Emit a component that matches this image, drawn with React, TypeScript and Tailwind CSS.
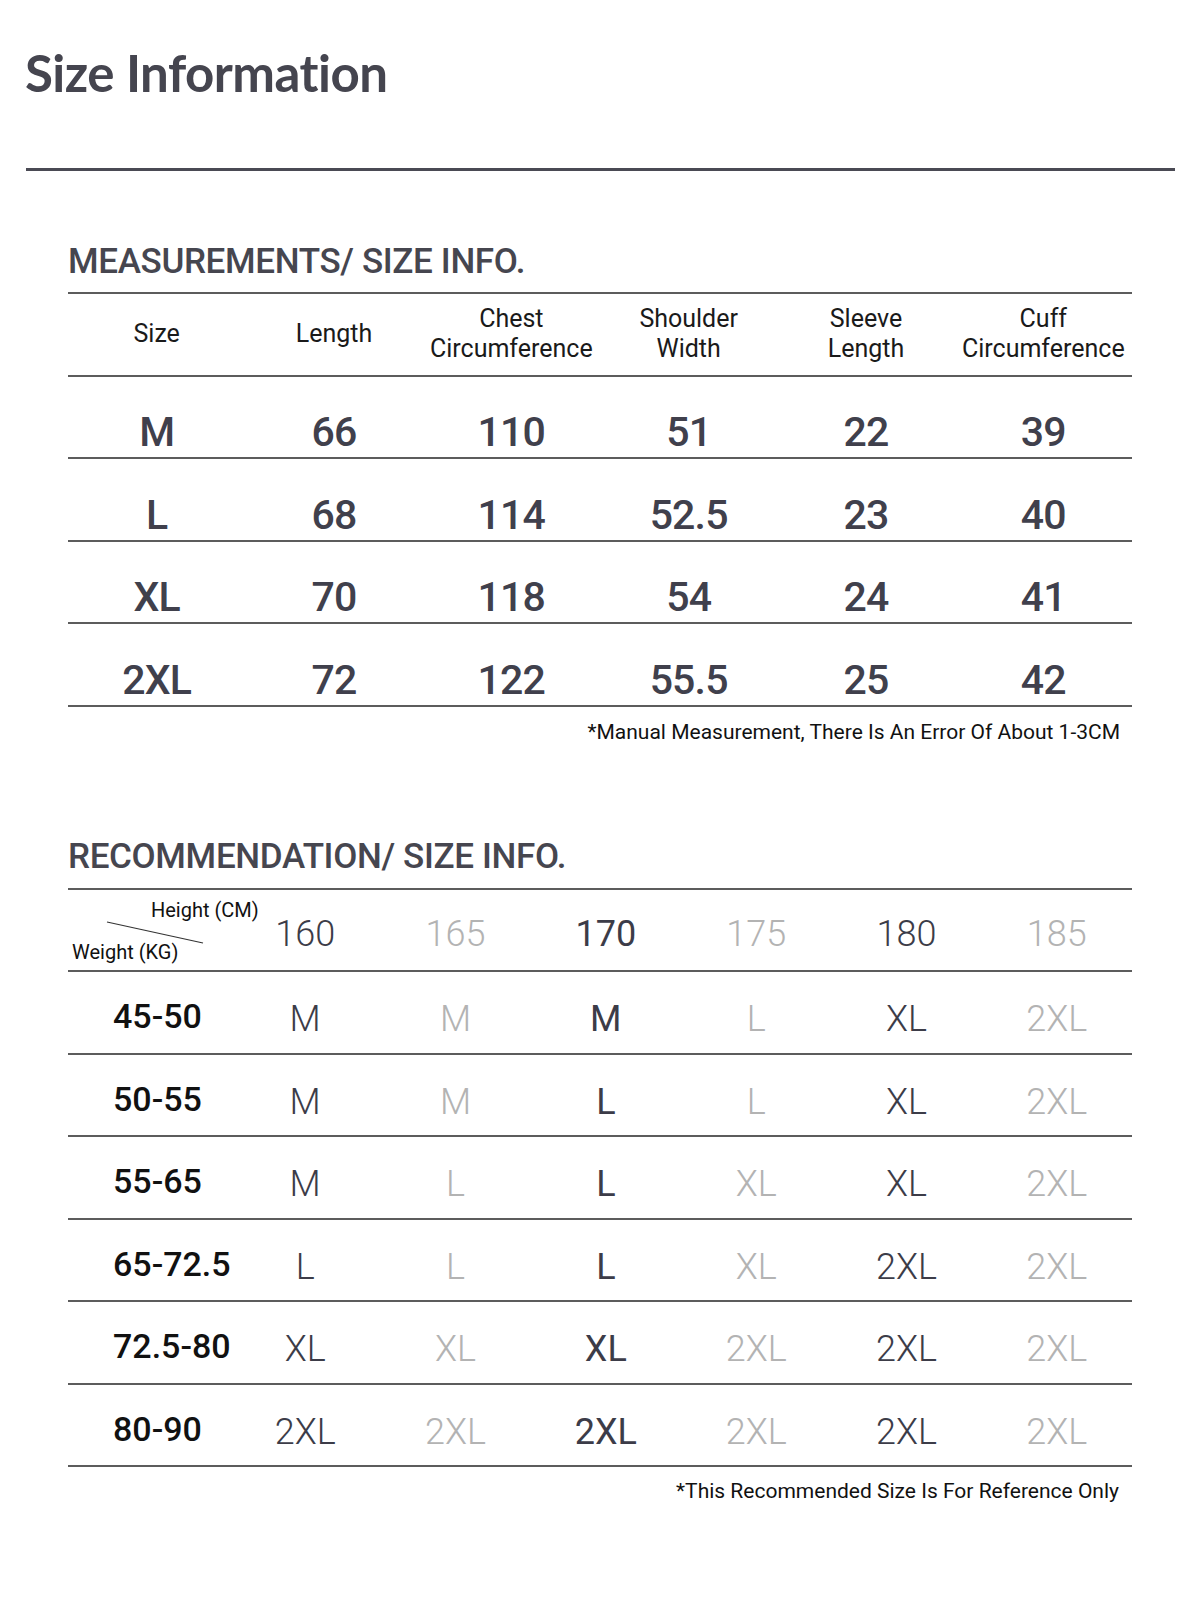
const measurements = [
  ['M', '66', '110', '51', '22', '39'],
  ['L', '68', '114', '52.5', '23', '40'],
  ['XL', '70', '118', '54', '24', '41'],
  ['2XL', '72', '122', '55.5', '25', '42'],
];

const heights = ['160', '165', '170', '175', '180', '185'];

const recommendations: [string, string[]][] = [
  ['45-50', ['M', 'M', 'M', 'L', 'XL', '2XL']],
  ['50-55', ['M', 'M', 'L', 'L', 'XL', '2XL']],
  ['55-65', ['M', 'L', 'L', 'XL', 'XL', '2XL']],
  ['65-72.5', ['L', 'L', 'L', 'XL', '2XL', '2XL']],
  ['72.5-80', ['XL', 'XL', 'XL', '2XL', '2XL', '2XL']],
  ['80-90', ['2XL', '2XL', '2XL', '2XL', '2XL', '2XL']],
];

// column look in the recommendation table: odd columns greyed out, 170 a bit heavier
const colTone = [
  'text-[#3c3c48] font-light',
  'text-[#b3b3b3] font-light',
  'text-[#3c3c48] font-normal',
  'text-[#b3b3b3] font-light',
  'text-[#3c3c48] font-light',
  'text-[#b3b3b3] font-light',
];

const roboto = "font-['Roboto','Noto_Sans',sans-serif]";

function SectionTitle({ children }: { children: string }) {
  return (
    <h2 className={`${roboto} text-[35px] leading-none font-medium text-[#46464f] tracking-[-0.01em]`}>{children}</h2>
  );
}

export default function App() {
  return (
    <div className={`w-[1200px] h-[1608px] bg-white overflow-hidden ${roboto}`}>
      {/* Page header */}
      <div className="pl-[25px] pt-[47px]">
        <h1 className="font-['Lato',sans-serif] text-[51px] leading-none font-bold text-[#45454f] tracking-[-0.01em]">
          Size Information
        </h1>
      </div>
      <div className="ml-[26px] w-[1149px] h-[3px] mt-[70px] bg-[#4a4a54]" />

      <div className="px-[68px]">
        {/* Measurements */}
        <div className="mt-[73px]">
          <SectionTitle>MEASUREMENTS/ SIZE INFO.</SectionTitle>
          <div className="mt-[13px] border-t-2 border-[#5c5c5c]">
            <div className="grid grid-cols-6 h-[82.5px] border-b-2 border-[#5c5c5c] items-center text-center text-[25px] leading-[30px] text-[#1a1a1a]">
              <div>Size</div>
              <div>Length</div>
              <div>
                Chest
                <br />
                Circumference
              </div>
              <div>
                Shoulder
                <br />
                Width
              </div>
              <div>
                Sleeve
                <br />
                Length
              </div>
              <div>
                Cuff
                <br />
                Circumference
              </div>
            </div>
            {measurements.map((row) => (
              <div
                key={row[0]}
                className="grid grid-cols-6 h-[82.5px] pt-[32px] border-b-2 border-[#5c5c5c] items-center text-center text-[41px] leading-none font-medium text-[#40404c] tracking-[-0.02em]"
              >
                {row.map((v, i) => (
                  <div key={i}>{v}</div>
                ))}
              </div>
            ))}
          </div>
          <p className="mt-[13px] pr-[12px] text-right text-[21px] leading-[24px] text-[#111]">
            *Manual Measurement, There Is An Error Of About 1-3CM
          </p>
        </div>

        {/* Recommendation */}
        <div className="mt-[95px]">
          <SectionTitle>RECOMMENDATION/ SIZE INFO.</SectionTitle>
          <div className="mt-[14px] border-t-2 border-[#5c5c5c]">
            <div className="grid grid-cols-[162px_repeat(6,1fr)] h-[82.5px] border-b-2 border-[#5c5c5c] items-center text-center">
              <div className="relative h-full flex flex-col items-start whitespace-nowrap text-[20px] leading-[24px] text-[#111]">
                <span className="pl-[83px] pt-[8px]">Height (CM)</span>
                <span className="pl-[4px] mt-[18px]">Weight (KG)</span>
                <svg className="absolute left-0 top-0" width="162" height="80" viewBox="0 0 162 80">
                  <line x1="39" y1="32" x2="135" y2="53" stroke="#333" strokeWidth="1.2" />
                </svg>
              </div>
              {heights.map((h, i) => (
                <div key={h} className={`pt-[9px] text-[36px] leading-none ${colTone[i]}`}>
                  {h}
                </div>
              ))}
            </div>
            {recommendations.map(([weight, sizes]) => (
              <div
                key={weight}
                className="grid grid-cols-[162px_repeat(6,1fr)] h-[82.5px] pt-[14px] border-b-2 border-[#5c5c5c] items-center text-center"
              >
                <div className="pl-[45px] pb-[6px] whitespace-nowrap text-left text-[34px] leading-none font-medium text-[#111]">
                  {weight}
                </div>
                {sizes.map((s, i) => (
                  <div key={i} className={`text-[36px] leading-none ${colTone[i]}`}>
                    {s}
                  </div>
                ))}
              </div>
            ))}
          </div>
          <p className="mt-[12px] pr-[13px] text-right text-[21px] leading-[24px] text-[#111]">
            *This Recommended Size Is For Reference Only
          </p>
        </div>
      </div>
    </div>
  );
}
